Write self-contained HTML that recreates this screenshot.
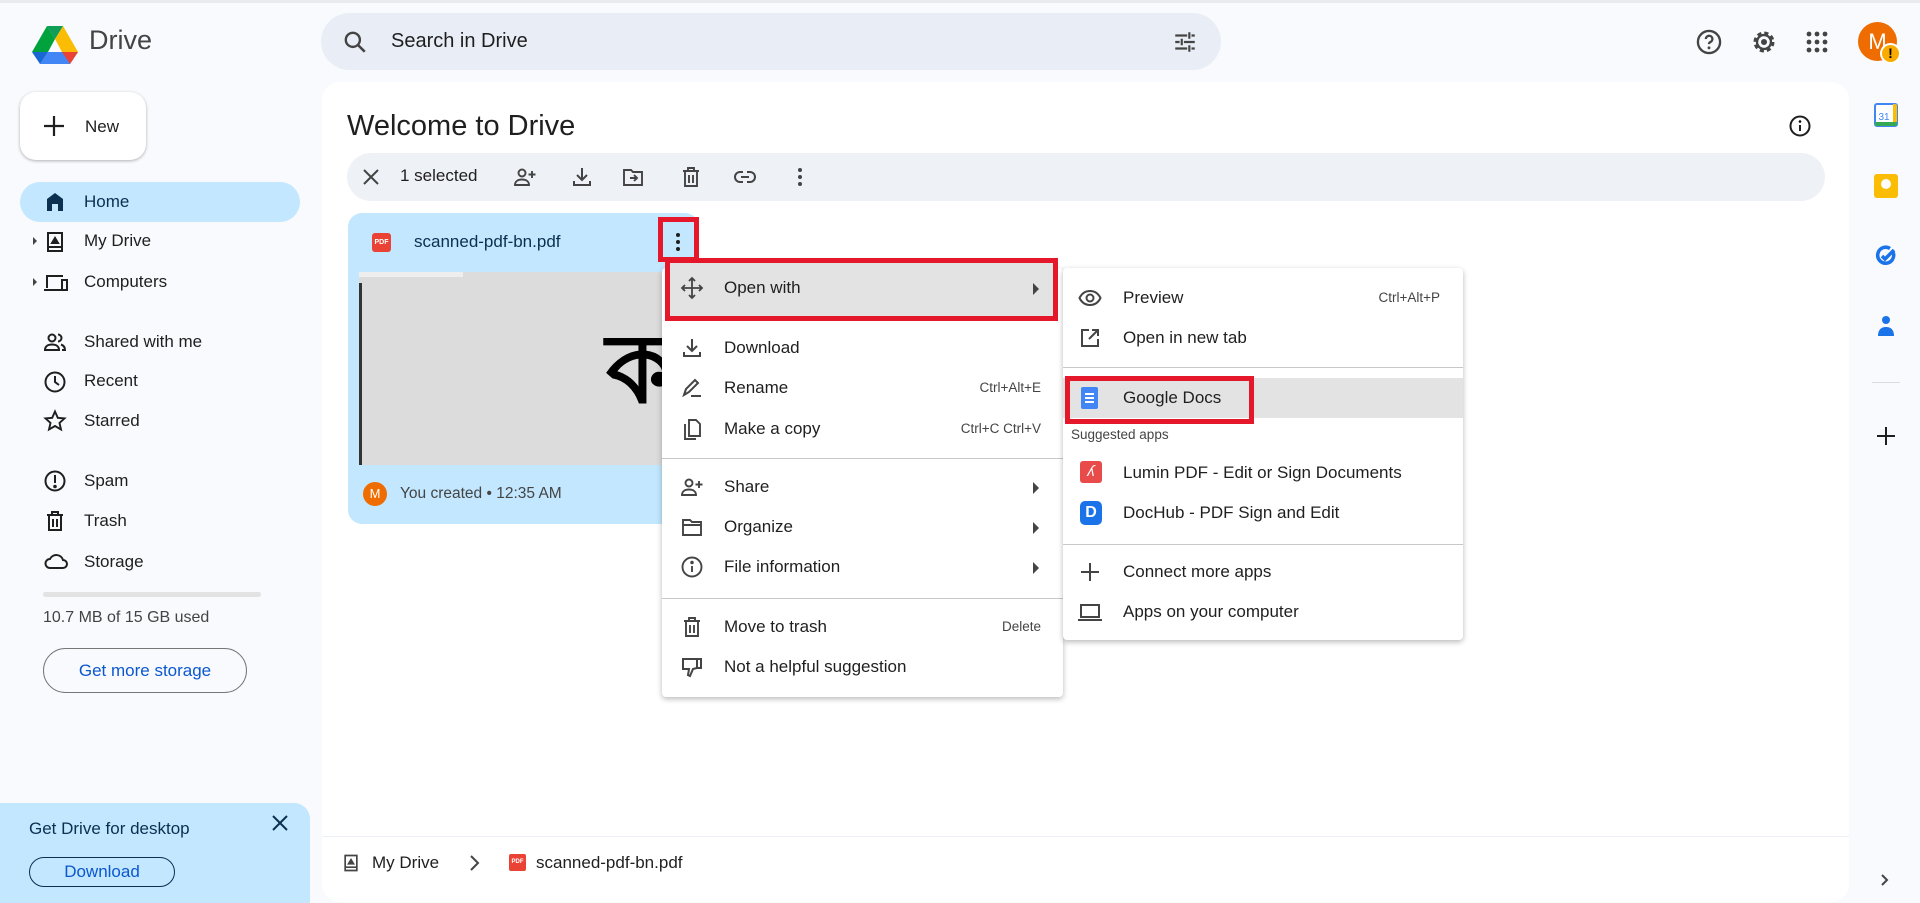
<!DOCTYPE html>
<html><head><meta charset="utf-8"><style>
*{box-sizing:border-box;margin:0;padding:0}
body{width:1920px;height:896px;overflow:hidden;background:#f8fafd;font-family:"Liberation Sans","Noto Sans CJK SC",sans-serif;color:#1f1f1f;position:relative}
.a{position:absolute}
svg{display:block}
.nav{position:absolute;left:84px;font-size:17px;color:#1f1f1f}
.ni{position:absolute;left:43px}
.mi{position:absolute;font-size:17px;color:#1f1f1f;white-space:nowrap}
.sc{position:absolute;font-size:13.5px;color:#444}
.arr{position:absolute;width:0;height:0;border-top:6px solid transparent;border-bottom:6px solid transparent;border-left:6px solid #444}
</style></head><body>
<div class="a" style="left:0;top:0;width:1920px;height:3px;background:#e8eaed"></div>
<!-- logo -->
<svg class="a" style="left:32px;top:26px" width="46" height="38" viewBox="0 0 46 38">
<path d="M15 0L0 26h16L23 13z" fill="#00a23c"/>
<path d="M31 0l15 26H30L23 13z" fill="#fbbc04"/>
<path d="M15 0h16l-8 13z" fill="#0f9d58"/>
<path d="M46 26l-8 12H8l8-12z" fill="#4285f4"/>
<path d="M0 26l8 12 8-12z" fill="#1967d2"/>
<path d="M46 26l-8 12-8-12z" fill="#ea4335"/>
</svg>
<div class="a" style="left:89px;top:25px;font-size:27px;color:#444">Drive</div>
<!-- search -->
<div class="a" style="left:321px;top:13px;width:900px;height:57px;border-radius:29px;background:#e9eef6"></div>
<svg class="a" style="left:342px;top:29px" width="26" height="26" viewBox="0 0 24 24"><circle cx="10" cy="10" r="6.5" fill="none" stroke="#444" stroke-width="2.2"/><path d="M15 15l6 6" stroke="#444" stroke-width="2.4"/></svg>
<div class="a" style="left:391px;top:30px;font-size:20px;color:#1f1f1f">Search in Drive</div>
<svg class="a" style="left:1172px;top:29px" width="26" height="26" viewBox="0 0 24 24" stroke="#444" stroke-width="2"><path d="M3 6h11M18 6h3M3 12h4M11 12h10M3 18h11M18 18h3M16 3v6M9 9v6M16 15v6"/></svg>
<!-- right top icons -->
<svg class="a" style="left:1695px;top:28px" width="28" height="28" viewBox="0 0 24 24"><circle cx="12" cy="12" r="9.5" fill="none" stroke="#444" stroke-width="2"/><path d="M9.3 9.5a2.8 2.8 0 1 1 3.7 2.6c-.8.4-1 .9-1 1.7" fill="none" stroke="#444" stroke-width="2"/><circle cx="12" cy="17" r="1.2" fill="#444"/></svg>
<svg class="a" style="left:1750px;top:28px" width="28" height="28" viewBox="0 0 24 24"><circle cx="12" cy="12" r="7" fill="none" stroke="#444" stroke-width="4" stroke-dasharray="3.2 2.3"/><circle cx="12" cy="12" r="6" fill="none" stroke="#444" stroke-width="2"/><circle cx="12" cy="12" r="2.6" fill="#444"/></svg>
<svg class="a" style="left:1806px;top:31px" width="22" height="22" viewBox="0 0 22 22" fill="#444"><circle cx="3" cy="3" r="2.4"/><circle cx="11" cy="3" r="2.4"/><circle cx="19" cy="3" r="2.4"/><circle cx="3" cy="11" r="2.4"/><circle cx="11" cy="11" r="2.4"/><circle cx="19" cy="11" r="2.4"/><circle cx="3" cy="19" r="2.4"/><circle cx="11" cy="19" r="2.4"/><circle cx="19" cy="19" r="2.4"/></svg>
<div class="a" style="left:1858px;top:22px;width:39px;height:39px;border-radius:50%;background:#ef6c00;color:#fff;font-size:22px;text-align:center;line-height:39px">M</div>
<div class="a" style="left:1880px;top:43px;width:21px;height:21px;border-radius:50%;background:#f9ab00;border:2px solid #fff;color:#000;font-size:14px;font-weight:bold;text-align:center;line-height:17px">!</div>
<!-- main panel -->
<div class="a" style="left:322px;top:82px;width:1527px;height:820px;background:#fff;border-radius:18px"></div>
<div class="a" style="left:347px;top:110px;font-size:29px;color:#1f1f1f">Welcome to Drive</div>
<svg class="a" style="left:1788px;top:114px" width="24" height="24" viewBox="0 0 24 24"><circle cx="12" cy="12" r="9.5" fill="none" stroke="#1f1f1f" stroke-width="2"/><path d="M12 11v6" stroke="#1f1f1f" stroke-width="2"/><circle cx="12" cy="7.5" r="1.3"/></svg>
<!-- toolbar -->
<div class="a" style="left:347px;top:153px;width:1478px;height:48px;border-radius:24px;background:#eef1f6"></div>
<svg class="a" style="left:362px;top:168px" width="18" height="18" viewBox="0 0 18 18"><path d="M2 2l14 14M16 2L2 16" stroke="#444" stroke-width="2"/></svg>
<div class="a" style="left:400px;top:166px;font-size:17px;color:#1f1f1f">1 selected</div>
<svg class="a" style="left:513px;top:165px" width="24" height="24" viewBox="0 0 24 24" fill="none" stroke="#444" stroke-width="1.9"><circle cx="9" cy="8" r="3.5"/><path d="M2 20c0-4 3.5-5.5 7-5.5s7 1.5 7 5.5zM19 6v7M15.5 9.5h7"/></svg>
<svg class="a" style="left:570px;top:165px" width="24" height="24" viewBox="0 0 24 24" fill="none" stroke="#444" stroke-width="2"><path d="M12 3v12M7 10l5 5 5-5M4 16v4h16v-4"/></svg>
<svg class="a" style="left:621px;top:165px" width="24" height="24" viewBox="0 0 24 24" fill="none" stroke="#444" stroke-width="1.9"><path d="M3 5h7l2 2h9v13H3z"/><path d="M9 13h7M13 10l3 3-3 3"/></svg>
<svg class="a" style="left:679px;top:165px" width="24" height="24" viewBox="0 0 24 24" fill="none" stroke="#444" stroke-width="1.9"><path d="M4 6h16M9 6V3h6v3M6 6v15h12V6M10 10v8M14 10v8"/></svg>
<svg class="a" style="left:733px;top:165px" width="24" height="24" viewBox="0 0 24 24" fill="none" stroke="#444" stroke-width="2"><path d="M10 7H7a5 5 0 0 0 0 10h3M14 7h3a5 5 0 0 1 0 10h-3M8 12h8"/></svg>
<svg class="a" style="left:797px;top:165px" width="6" height="24" viewBox="0 0 6 24" fill="#444"><circle cx="3" cy="5" r="2"/><circle cx="3" cy="12" r="2"/><circle cx="3" cy="19" r="2"/></svg>
<!-- file card -->
<div class="a" style="left:348px;top:213px;width:351px;height:311px;border-radius:14px;background:#c2e7ff"></div>
<div class="a" style="left:372px;top:233px;width:19px;height:19px;border-radius:3px;background:#ea4335;color:#fff;font-size:7px;font-weight:bold;text-align:center;line-height:19px">PDF</div>
<div class="a" style="left:414px;top:232px;font-size:17px;color:#0b3050">scanned-pdf-bn.pdf</div>
<div class="a" style="left:359px;top:272px;width:330px;height:193px;background:#dcdcdc;overflow:hidden">
<div class="a" style="left:0;top:0;width:104px;height:5px;background:#eee"></div>
<div class="a" style="left:0;top:11px;width:3px;height:182px;background:#333"></div>
<div class="a" style="left:247px;top:50px;font-size:96px;font-weight:bold;color:#000;line-height:1">ক</div>
</div>
<div class="a" style="left:363px;top:482px;width:24px;height:24px;border-radius:50%;background:#ef6c00;color:#fff;font-size:13px;text-align:center;line-height:24px">M</div>
<div class="a" style="left:400px;top:485px;font-size:15.5px;color:#444">You created • 12:35 AM</div>
<!-- kebab red box -->
<div class="a" style="left:658px;top:217px;width:41px;height:45px;border:5px solid #e5172b;background:#c2e7ff"></div>
<svg class="a" style="left:675px;top:231px" width="6" height="22" viewBox="0 0 6 22" fill="#1f1f1f"><circle cx="3" cy="4" r="2"/><circle cx="3" cy="11" r="2"/><circle cx="3" cy="18" r="2"/></svg>
<!-- menu 1 -->
<div class="a" style="left:662px;top:268px;width:401px;height:429px;background:#fff;border-radius:4px;box-shadow:0 2px 6px rgba(0,0,0,.28)"></div>
<div class="a" style="left:665px;top:258px;width:393px;height:63px;border:5px solid #e5172b;background:#e3e3e3"></div>
<svg class="a" style="left:680px;top:276px" width="24" height="24" viewBox="0 0 24 24" fill="none" stroke="#444" stroke-width="1.8"><path d="M12 2v20M2 12h20M9 5l3-3 3 3M9 19l3 3 3-3M5 9l-3 3 3 3M19 9l3 3-3 3"/></svg>
<div class="mi" style="left:724px;top:278px">Open with</div>
<div class="arr" style="left:1033px;top:283px"></div>
<div class="a" style="left:662px;top:458px;width:401px;height:1px;background:#c7c7c7"></div>
<div class="a" style="left:662px;top:598px;width:401px;height:1px;background:#c7c7c7"></div>
<svg class="a" style="left:680px;top:336px" width="24" height="24" viewBox="0 0 24 24" fill="none" stroke="#444" stroke-width="2"><path d="M12 3v12M7 10l5 5 5-5M4 16v4h16v-4"/></svg>
<div class="mi" style="left:724px;top:338px">Download</div>
<svg class="a" style="left:680px;top:376px" width="24" height="24" viewBox="0 0 24 24" fill="none" stroke="#444" stroke-width="2"><path d="M4 19l2-6L15 4l3 3-9 9zM11 20h10"/></svg>
<div class="mi" style="left:724px;top:378px">Rename</div>
<div class="sc" style="right:879px;top:380px">Ctrl+Alt+E</div>
<svg class="a" style="left:680px;top:417px" width="24" height="24" viewBox="0 0 24 24" fill="none" stroke="#444" stroke-width="1.9"><path d="M9 3h7l4 4v12H9zM5 7v15h11"/></svg>
<div class="mi" style="left:724px;top:419px">Make a copy</div>
<div class="sc" style="right:879px;top:421px">Ctrl+C Ctrl+V</div>
<svg class="a" style="left:680px;top:475px" width="24" height="24" viewBox="0 0 24 24" fill="none" stroke="#444" stroke-width="1.9"><circle cx="9" cy="8" r="3.5"/><path d="M2 20c0-4 3.5-5.5 7-5.5s7 1.5 7 5.5zM19 6v7M15.5 9.5h7"/></svg>
<div class="mi" style="left:724px;top:477px">Share</div>
<div class="arr" style="left:1033px;top:482px"></div>
<svg class="a" style="left:680px;top:515px" width="24" height="24" viewBox="0 0 24 24" fill="none" stroke="#444" stroke-width="1.9"><path d="M3 5h7l2 2h9v13H3zM3 10h18"/></svg>
<div class="mi" style="left:724px;top:517px">Organize</div>
<div class="arr" style="left:1033px;top:522px"></div>
<svg class="a" style="left:680px;top:555px" width="24" height="24" viewBox="0 0 24 24" fill="none" stroke="#444" stroke-width="1.9"><circle cx="12" cy="12" r="9.5"/><path d="M12 11v6"/><circle cx="12" cy="7.5" r=".8" fill="#444"/></svg>
<div class="mi" style="left:724px;top:557px">File information</div>
<div class="arr" style="left:1033px;top:562px"></div>
<svg class="a" style="left:680px;top:615px" width="24" height="24" viewBox="0 0 24 24" fill="none" stroke="#444" stroke-width="1.9"><path d="M4 6h16M9 6V3h6v3M6 6v15h12V6M10 10v8M14 10v8"/></svg>
<div class="mi" style="left:724px;top:617px">Move to trash</div>
<div class="sc" style="right:879px;top:619px">Delete</div>
<svg class="a" style="left:680px;top:655px" width="24" height="24" viewBox="0 0 24 24" fill="none" stroke="#444" stroke-width="2"><path d="M3 4h14v9l-4 1-3 7-2-1 1-6H3zM17 4h4v9h-4"/></svg>
<div class="mi" style="left:724px;top:657px">Not a helpful suggestion</div>
<!-- menu 2 -->
<div class="a" style="left:1063px;top:268px;width:400px;height:372px;background:#fff;border-radius:4px;box-shadow:0 2px 6px rgba(0,0,0,.28)"></div>
<div class="a" style="left:1063px;top:367px;width:400px;height:1px;background:#c7c7c7"></div>
<div class="a" style="left:1063px;top:544px;width:400px;height:1px;background:#c7c7c7"></div>
<div class="a" style="left:1063px;top:378px;width:400px;height:40px;background:#e3e3e3"></div>
<div class="a" style="left:1065px;top:376px;width:189px;height:48px;border:5px solid #e5172b"></div>
<svg class="a" style="left:1078px;top:286px" width="24" height="24" viewBox="0 0 24 24" fill="none" stroke="#444" stroke-width="2"><path d="M1.5 12C4 7 8 5 12 5s8 2 10.5 7C20 17 16 19 12 19s-8-2-10.5-7z"/><circle cx="12" cy="12" r="3.5"/></svg>
<div class="mi" style="left:1123px;top:288px">Preview</div>
<div class="sc" style="right:480px;top:290px">Ctrl+Alt+P</div>
<svg class="a" style="left:1078px;top:326px" width="24" height="24" viewBox="0 0 24 24" fill="none" stroke="#444" stroke-width="2"><path d="M11 4H4v16h16v-7M14 4h6v6M20 4l-9 9"/></svg>
<div class="mi" style="left:1123px;top:328px">Open in new tab</div>
<div class="a" style="left:1081px;top:387px;width:17px;height:22px;border-radius:2px;background:#4285f4"></div>
<div class="a" style="left:1085px;top:393px;width:9px;height:2px;background:#fff;box-shadow:0 4px 0 #fff,0 8px 0 #fff"></div>
<div class="mi" style="left:1123px;top:388px">Google Docs</div>
<div class="a" style="left:1071px;top:427px;font-size:13.5px;color:#444">Suggested apps</div>
<div class="a" style="left:1080px;top:461px;width:22px;height:22px;border-radius:3px;background:#e94b4b;color:#fff;font-size:15px;text-align:center;line-height:22px;font-style:italic">ʎ</div>
<div class="mi" style="left:1123px;top:463px">Lumin PDF - Edit or Sign Documents</div>
<div class="a" style="left:1080px;top:501px;width:22px;height:24px;border-radius:5px;background:#1a73e8;color:#fff;font-size:16px;font-weight:bold;text-align:center;line-height:24px">D</div>
<div class="mi" style="left:1123px;top:503px">DocHub - PDF Sign and Edit</div>
<svg class="a" style="left:1078px;top:560px" width="24" height="24" viewBox="0 0 24 24"><path d="M12 3v18M3 12h18" stroke="#444" stroke-width="2"/></svg>
<div class="mi" style="left:1123px;top:562px">Connect more apps</div>
<svg class="a" style="left:1077px;top:600px" width="26" height="24" viewBox="0 0 26 24" fill="none" stroke="#444" stroke-width="2"><path d="M4 5h18v12H4zM1 20h24"/></svg>
<div class="mi" style="left:1123px;top:602px">Apps on your computer</div>
<!-- sidebar -->
<div class="a" style="left:20px;top:92px;width:126px;height:68px;border-radius:16px;background:#fff;box-shadow:0 1px 3px rgba(0,0,0,.3)"></div>
<svg class="a" style="left:43px;top:115px" width="22" height="22" viewBox="0 0 22 22"><path d="M11 1v20M1 11h20" stroke="#1f1f1f" stroke-width="2.2"/></svg>
<div class="a" style="left:85px;top:117px;font-size:17px;color:#1f1f1f">New</div>
<div class="a" style="left:20px;top:182px;width:280px;height:40px;border-radius:20px;background:#c2e7ff"></div>
<svg class="ni" style="top:191px" width="24" height="22" viewBox="0 0 24 22"><path d="M12 2L4 8v12h5v-7h6v7h5V8z" fill="#0b3050"/></svg>
<div class="nav" style="top:192px;color:#0b3050">Home</div>
<div class="a" style="left:33px;top:237px;border-top:4px solid transparent;border-bottom:4px solid transparent;border-left:4px solid #444"></div>
<svg class="ni" style="top:230px" width="24" height="24" viewBox="0 0 24 24" fill="none" stroke="#1f1f1f" stroke-width="2"><path d="M5 3h14v18H5zM5 17h14"/><path d="M12 8l-3 5h6z" fill="#1f1f1f"/></svg>
<div class="nav" style="top:231px">My Drive</div>
<div class="a" style="left:33px;top:278px;border-top:4px solid transparent;border-bottom:4px solid transparent;border-left:4px solid #444"></div>
<svg class="ni" style="top:271px" width="26" height="24" viewBox="0 0 26 24" fill="none" stroke="#1f1f1f" stroke-width="2"><path d="M4 17V5h16M1 19h17M19 9h5v10h-5z"/></svg>
<div class="nav" style="top:272px">Computers</div>
<svg class="ni" style="top:330px" width="24" height="24" viewBox="0 0 24 24" fill="none" stroke="#1f1f1f" stroke-width="2"><circle cx="9" cy="8" r="3.5"/><path d="M2 20c0-4 3.5-5.5 7-5.5s7 1.5 7 5.5zM15 4.5a3.5 3.5 0 0 1 0 7M18 14.5c2 .7 4 2 4 5.5h-3"/></svg>
<div class="nav" style="top:332px">Shared with me</div>
<svg class="ni" style="top:370px" width="24" height="24" viewBox="0 0 24 24" fill="none" stroke="#1f1f1f" stroke-width="2"><circle cx="12" cy="12" r="9.5"/><path d="M12 6v6l4 3"/></svg>
<div class="nav" style="top:371px">Recent</div>
<svg class="ni" style="top:409px" width="24" height="24" viewBox="0 0 24 24" fill="none" stroke="#1f1f1f" stroke-width="1.9"><path d="M12 2.5l2.8 6.3 6.7.6-5 4.5 1.5 6.6L12 17l-6 3.5 1.5-6.6-5-4.5 6.7-.6z"/></svg>
<div class="nav" style="top:411px">Starred</div>
<svg class="ni" style="top:469px" width="24" height="24" viewBox="0 0 24 24" fill="none" stroke="#1f1f1f" stroke-width="2"><circle cx="12" cy="12" r="9.5"/><path d="M12 6v8"/><circle cx="12" cy="17.5" r=".8" fill="#1f1f1f"/></svg>
<div class="nav" style="top:471px">Spam</div>
<svg class="ni" style="top:509px" width="24" height="24" viewBox="0 0 24 24" fill="none" stroke="#1f1f1f" stroke-width="2"><path d="M4 6h16M9 6V3h6v3M6 6v15h12V6M10 10v8M14 10v8"/></svg>
<div class="nav" style="top:511px">Trash</div>
<svg class="ni" style="top:550px" width="26" height="22" viewBox="0 0 26 22" fill="none" stroke="#1f1f1f" stroke-width="2"><path d="M7 18h13a4 4 0 0 0 0-8 7 7 0 0 0-13-1 4.5 4.5 0 0 0 0 9z"/></svg>
<div class="nav" style="top:552px">Storage</div>
<div class="a" style="left:43px;top:592px;width:218px;height:5px;border-radius:3px;background:#e3e3e3"></div>
<div class="a" style="left:43px;top:609px;font-size:16px;color:#444">10.7 MB of 15 GB used</div>
<div class="a" style="left:43px;top:648px;width:204px;height:45px;border:1px solid #747775;border-radius:23px;color:#0b57d0;font-size:17px;text-align:center;line-height:43px">Get more storage</div>
<!-- desktop promo -->
<div class="a" style="left:0;top:803px;width:310px;height:100px;border-radius:0 16px 0 0;background:#c2e7ff"></div>
<div class="a" style="left:29px;top:819px;font-size:17px;color:#0b3050">Get Drive for desktop</div>
<svg class="a" style="left:272px;top:815px" width="16" height="16" viewBox="0 0 16 16"><path d="M1 1l14 14M15 1L1 15" stroke="#0b3050" stroke-width="2"/></svg>
<div class="a" style="left:29px;top:857px;width:146px;height:30px;border:1.5px solid #0b3050;border-radius:15px;color:#0b57d0;font-size:17px;text-align:center;line-height:27px">Download</div>
<!-- breadcrumb -->
<div class="a" style="left:322px;top:836px;width:1527px;height:1px;background:#eceff3"></div>
<svg class="a" style="left:341px;top:852px" width="20" height="22" viewBox="0 0 24 24" fill="none" stroke="#444" stroke-width="2"><path d="M5 3h14v18H5zM5 17h14"/><path d="M12 8l-3 5h6z" fill="#444"/></svg>
<div class="a" style="left:372px;top:853px;font-size:17px;color:#1f1f1f">My Drive</div>
<svg class="a" style="left:469px;top:854px" width="12" height="18" viewBox="0 0 12 18"><path d="M2 2l7 7-7 7" fill="none" stroke="#444" stroke-width="2"/></svg>
<div class="a" style="left:509px;top:854px;width:17px;height:17px;border-radius:2px;background:#ea4335;color:#fff;font-size:6px;font-weight:bold;text-align:center;line-height:17px">PDF</div>
<div class="a" style="left:536px;top:853px;font-size:17px;color:#1f1f1f">scanned-pdf-bn.pdf</div>
<!-- right side panel -->
<svg class="a" style="left:1874px;top:103px" width="24" height="24" viewBox="0 0 24 24"><rect x="1" y="1" width="22" height="22" rx="2" fill="#fff" stroke="#4285f4" stroke-width="2"/><path d="M1 19h22v2a2 2 0 0 1-2 2H3a2 2 0 0 1-2-2z" fill="#34a853"/><path d="M19 1h2a2 2 0 0 1 2 2v16h-4z" fill="#fbbc04"/><text x="10" y="17" font-size="10" fill="#4285f4" text-anchor="middle" font-family="Liberation Sans">31</text></svg>
<div class="a" style="left:1874px;top:174px;width:24px;height:24px;border-radius:3px;background:#fbbc04"></div>
<div class="a" style="left:1881px;top:179px;width:10px;height:10px;border-radius:50%;background:#fff"></div>
<svg class="a" style="left:1874px;top:244px" width="24" height="24" viewBox="0 0 24 24" fill="none" stroke="#1a73e8" stroke-width="3.5"><path d="M19 8a8 8 0 1 1-3-3.5"/><path d="M8 12l3 3 9-9"/></svg>
<svg class="a" style="left:1875px;top:314px" width="22" height="24" viewBox="0 0 22 24" fill="#1a73e8"><circle cx="11" cy="6" r="4"/><path d="M3 22c0-7 4-9 8-9s8 2 8 9z"/></svg>
<div class="a" style="left:1872px;top:382px;width:28px;height:1px;background:#dadce0"></div>
<svg class="a" style="left:1876px;top:426px" width="20" height="20" viewBox="0 0 20 20"><path d="M10 1v18M1 10h18" stroke="#1f1f1f" stroke-width="2"/></svg>
<svg class="a" style="left:1880px;top:873px" width="10" height="14" viewBox="0 0 10 14"><path d="M2 2l5 5-5 5" fill="none" stroke="#444" stroke-width="2"/></svg>
</body></html>
